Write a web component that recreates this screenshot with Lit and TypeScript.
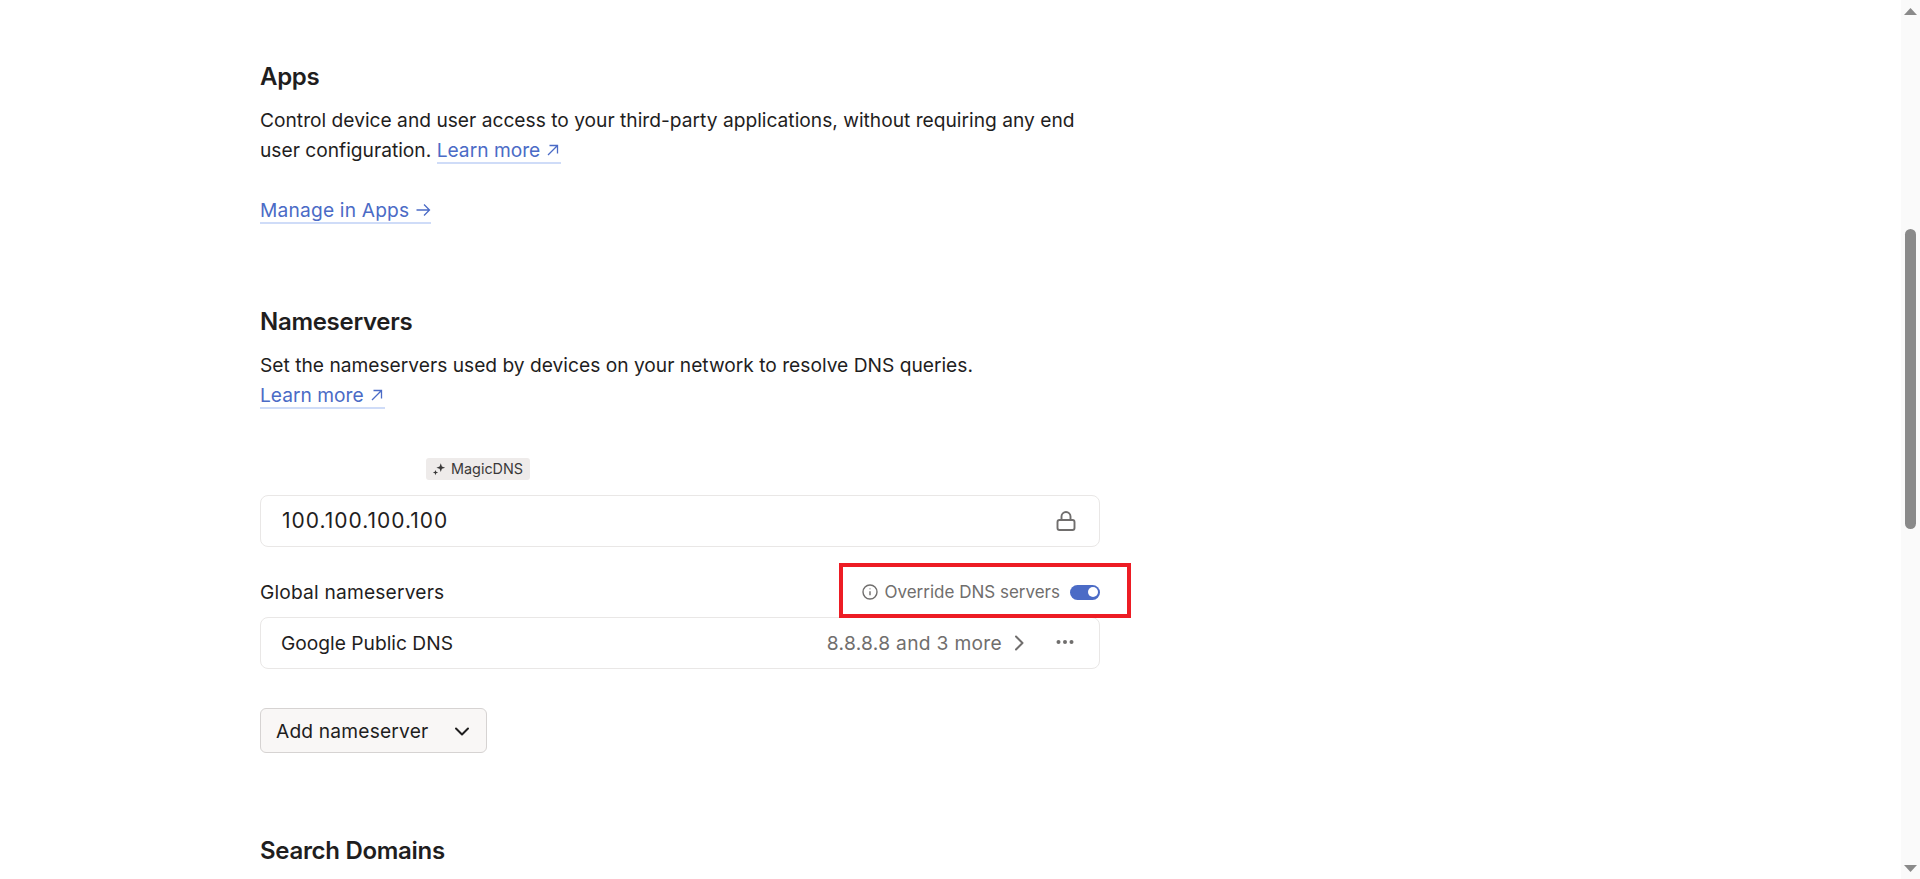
import { LitElement, html, css } from "lit";
import { customElement } from "lit/decorators.js";

const upRight = html`<svg class="arrow" viewBox="0 0 16 16" fill="none" stroke="currentColor" stroke-width="1.3"><path d="M3 13 12.5 3.5M4.5 3.5h8v8"/></svg>`;
const right = html`<svg class="arrow" viewBox="0 0 16 16" fill="none" stroke="currentColor" stroke-width="1.3"><path d="M1.5 8h13M9 2.5 14.5 8 9 13.5"/></svg>`;

@customElement("app-root")
export class AppRoot extends LitElement {
  static styles = css`
    :host { display: block; height: 879px; overflow: hidden; position: relative; background: #fff; font-family: Inter, "Liberation Sans", sans-serif; color: #1f1e1e; font-size: 19.2px; line-height: 30px; }
    main { width: 840px; margin-left: 260px; padding-top: 61px; box-sizing: border-box; }
    h2 { margin: 0; font-size: 24px; line-height: 32px; font-weight: 600; letter-spacing: -0.3px; }
    p { margin: 12px 0 0; }
    a { color: #4b6bc6; text-decoration: none; border-bottom: 2px solid #cfdcf8; display: inline-flex; align-items: center; gap: 5px; line-height: 24px; }
    .arrow { width: 16px; height: 16px; }
    .manage { margin-top: 30px; }
    .manage a { letter-spacing: 0.18px; gap: 6px; }
    .apps { height: 245px; }
    .badge-row { margin-top: 48px; padding-left: 166px; height: 22px; display: flex; }
    .badge { display: flex; align-items: center; gap: 5px; background: #eeebea; border-radius: 3px; padding: 0 7px 0 6px; height: 22px; font-size: 14.4px; line-height: 22px; color: #3a3939; }
    .badge svg { width: 14px; height: 14px; }
    .field { border: 1px solid #e9e7e6; border-radius: 8px; height: 52px; box-sizing: border-box; display: flex; align-items: center; padding: 0 21px; background: #fff; }
    .ip { margin-top: 15px; justify-content: space-between; font-size: 21px; letter-spacing: 1px; }
    .ip svg { width: 24px; height: 24px; color: #706e6d; }
    .label-row { display: flex; justify-content: space-between; align-items: center; margin-top: 30px; height: 30px; }
    .label { letter-spacing: 0.18px; }
    .override { display: flex; align-items: center; color: #706e6d; font-size: 17px; }
    .override svg { width: 18px; height: 18px; margin-right: 5px; }
    .toggle { width: 30px; height: 15px; border-radius: 8px; background: #4b6bc6; margin-left: 10px; display: flex; justify-content: flex-end; align-items: center; padding-right: 2px; box-sizing: border-box; }
    .toggle i { width: 10px; height: 10px; background: #fff; border-radius: 50%; display: block; }
    .dns { margin-top: 10px; padding: 0 23px 0 20px; }
    .dns-name { flex: 1; }
    .dns-value { color: #706e6d; letter-spacing: 0.3px; }
    .dns svg { color: #706e6d; }
    .chev { width: 18px; height: 18px; margin: 0 26px 0 8px; }
    .dots { width: 22px; height: 22px; }
    button { margin-top: 39px; width: 227px; height: 45px; box-sizing: border-box; background: #f9f7f6; border: 1px solid #d6d3d2; border-radius: 6px; font: 400 19.2px Inter, sans-serif; letter-spacing: 0.18px; color: #1f1e1e; display: flex; align-items: center; justify-content: space-between; padding: 0 15px; }
    button svg { width: 18px; height: 18px; }
    .search { margin-top: 82px; }
    .marker { position: absolute; left: 839px; top: 563px; width: 292px; height: 55px; box-sizing: border-box; border: 4px solid #ed1c24; pointer-events: none; }
    .scrollbar { position: absolute; right: 0; top: 0; bottom: 0; width: 19px; background: #fafafa; }
    .thumb { position: absolute; left: 4px; right: 4px; top: 229px; height: 300px; background: #8a8a8a; border-radius: 6px; }
    .up, .down { position: absolute; left: 3px; width: 13px; height: 7px; }
    .up { top: 8px; } .down { bottom: 7px; }
  `;

  render() {
    return html`
      <main>
        <section class="apps">
          <h2>Apps</h2>
          <p>Control device and user access to your third-party applications, without requiring any end user configuration. <a href="#">Learn more ${upRight}</a></p>
          <p class="manage"><a href="#">Manage in Apps ${right}</a></p>
        </section>
        <section>
          <h2>Nameservers</h2>
          <p>Set the nameservers used by devices on your network to resolve DNS queries.<br><a href="#">Learn more ${upRight}</a></p>
          <div class="badge-row"><span class="badge">
            <svg viewBox="0 0 16 16" fill="#3a3939"><path d="M10 1.5l1.3 3.7L15 6.5l-3.7 1.3L10 11.5 8.7 7.8 5 6.5l3.7-1.3zM4 9l.8 2.2 2.2.8-2.2.8L4 15l-.8-2.2L1 12l2.2-.8z"/></svg>
            MagicDNS</span></div>
          <div class="field ip">100.100.100.100
            <svg viewBox="0 0 24 24" fill="none" stroke="currentColor" stroke-width="1.9" stroke-linecap="round"><rect x="3.5" y="11" width="17" height="10" rx="2"/><path d="M7.5 11V7.5a4.5 4.5 0 0 1 9 0V11"/></svg>
          </div>
          <div class="label-row"><span class="label">Global nameservers</span>
            <span class="override">
              <svg viewBox="0 0 18 18" fill="none" stroke="currentColor" stroke-width="1.4"><circle cx="9" cy="9" r="7"/><path d="M9 8.3v4M9 5.4v.8"/></svg>
              Override DNS servers<span class="toggle"><i></i></span>
            </span>
          </div>
          <div class="field dns"><span class="dns-name">Google Public DNS</span><span class="dns-value">8.8.8.8 and 3 more</span>
            <svg class="chev" viewBox="0 0 18 18" fill="none" stroke="currentColor" stroke-width="2" stroke-linecap="round" stroke-linejoin="round"><path d="M6 2.5 12.5 9 6 15.5"/></svg>
            <svg class="dots" viewBox="0 0 22 22" fill="currentColor"><circle cx="4.5" cy="10" r="2"/><circle cx="11" cy="10" r="2"/><circle cx="17.5" cy="10" r="2"/></svg>
          </div>
          <button>Add nameserver
            <svg viewBox="0 0 18 18" fill="none" stroke="currentColor" stroke-width="2" stroke-linecap="round" stroke-linejoin="round"><path d="M3 6.5 9 12.5l6-6"/></svg>
          </button>
        </section>
        <h2 class="search">Search Domains</h2>
      </main>
      <div class="marker"></div>
      <div class="scrollbar">
        <svg class="up" viewBox="0 0 13 7" fill="#8a8a8a"><path d="M6.5 0 13 7H0z"/></svg>
        <div class="thumb"></div>
        <svg class="down" viewBox="0 0 13 7" fill="#8a8a8a"><path d="M0 0h13L6.5 7z"/></svg>
      </div>
    `;
  }
}
